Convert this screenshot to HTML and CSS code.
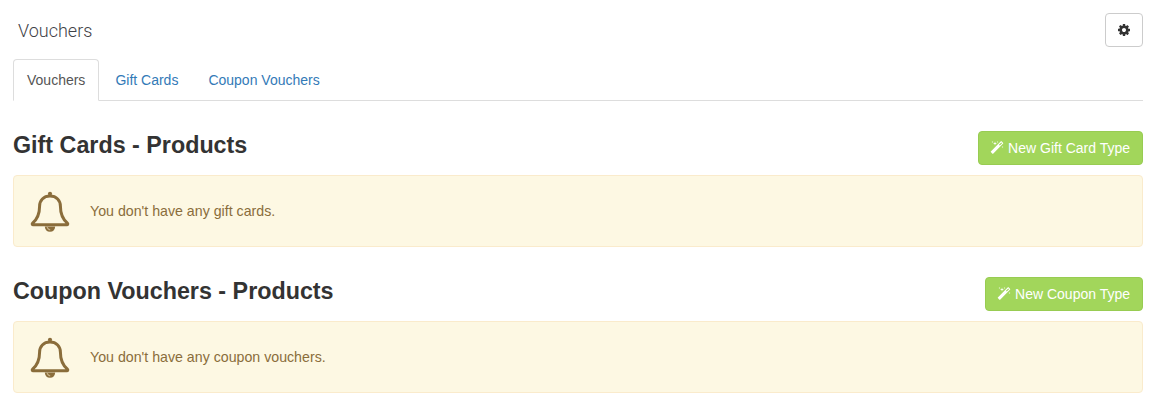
FILE: index.html
```html
<!DOCTYPE html>
<html lang="en">
<head>
<meta charset="utf-8">
<title>Vouchers</title>
<link rel="stylesheet" href="styles.css">
</head>
<body>
<div class="page">
  <header class="top">
    <h1 class="title">Vouchers</h1>
    <button class="btn-settings" type="button" aria-label="Settings">
      <svg class="icon-cog" viewBox="0 0 1792 1792"><path d="M1152 896q0-106-75-181t-181-75-181 75-75 181 75 181 181 75 181-75 75-181zm512-109v222q0 12-8 23t-20 13l-185 28q-19 54-39 91 35 50 107 138 10 12 10 25t-9 23q-27 37-99 108t-94 71q-12 0-26-9l-138-108q-44 23-91 38-16 136-29 186-7 28-36 28h-222q-14 0-24.5-8.5t-11.5-21.5l-28-184q-49-16-90-37l-141 107q-10 9-25 9-14 0-25-11-126-114-165-168-7-10-7-23 0-12 8-23 15-21 51-66.5t54-70.5q-27-50-41-99l-183-27q-13-2-21-12.5t-8-23.5v-222q0-12 8-23t19-13l186-28q14-46 39-92-40-57-107-138-10-12-10-24 0-10 9-23 26-36 98.5-107.5t94.5-71.5q13 0 26 10l138 107q44-23 91-38 16-136 29-186 7-28 36-28h222q14 0 24.5 8.5t11.5 21.5l28 184q49 16 90 37l142-107q9-9 24-9 13 0 25 10 129 119 165 170 7 8 7 22 0 12-8 23-15 21-51 66.5t-54 70.5q26 50 41 98l183 28q13 2 21 12.5t8 23.5z"/></svg>
    </button>
  </header>
  <nav class="tabs">
    <a class="tab tab-active" href="#">Vouchers</a>
    <a class="tab" href="#">Gift Cards</a>
    <a class="tab" href="#">Coupon Vouchers</a>
  </nav>
  <section class="block">
    <div class="block-head">
      <h2 class="block-title">Gift Cards - Products</h2>
      <a class="btn-new" href="#">
        <svg class="icon-wand" viewBox="0 0 1792 1792"><path d="M1254 581l293-293-107-107-293 293zm447-293q0 27-18 45l-1286 1286q-18 18-45 18t-45-18l-198-198q-18-18-18-45t18-45l1286-1286q18-18 45-18t45 18l198 198q18 18 18 45zm-1351-190l98 30-98 30-30 98-30-98-98-30 98-30 30-98zm350 162l196 60-196 60-60 196-60-196-196-60 196-60 60-196zm930 478l98 30-98 30-30 98-30-98-98-30 98-30 30-98zm-640-640l98 30-98 30-30 98-30-98-98-30 98-30 30-98z"/></svg>
        New Gift Card Type
      </a>
    </div>
    <div class="alert">
      <svg class="icon-bell" viewBox="0 0 40 43"><path class="bell-line" d="M20 6C13.5 6 9.6 10.5 9.6 16C9.6 25 7 29.5 2.6 33.2C1.9 33.8 2.2 34.8 3.2 34.8H36.8C37.8 34.8 38.1 33.8 37.4 33.2C33 29.5 30.4 25 30.4 16C30.4 10.5 26.5 6 20 6Z"/><circle class="bell-fill" cx="20" cy="3.8" r="2.1"/><path class="bell-fill" d="M14.8 36.5H25.2C25 39.8 23 41.8 20 41.8C17 41.8 15 39.8 14.8 36.5Z"/><path class="bell-inner" d="M17.2 37C17.5 38.6 18.5 39.6 20.2 39.8"/></svg>
      <p class="alert-text">You don't have any gift cards.</p>
    </div>
  </section>
  <section class="block">
    <div class="block-head">
      <h2 class="block-title">Coupon Vouchers - Products</h2>
      <a class="btn-new" href="#">
        <svg class="icon-wand" viewBox="0 0 1792 1792"><path d="M1254 581l293-293-107-107-293 293zm447-293q0 27-18 45l-1286 1286q-18 18-45 18t-45-18l-198-198q-18-18-18-45t18-45l1286-1286q18-18 45-18t45 18l198 198q18 18 18 45zm-1351-190l98 30-98 30-30 98-30-98-98-30 98-30 30-98zm350 162l196 60-196 60-60 196-60-196-196-60 196-60 60-196zm930 478l98 30-98 30-30 98-30-98-98-30 98-30 30-98zm-640-640l98 30-98 30-30 98-30-98-98-30 98-30 30-98z"/></svg>
        New Coupon Type
      </a>
    </div>
    <div class="alert">
      <svg class="icon-bell" viewBox="0 0 40 43"><path class="bell-line" d="M20 6C13.5 6 9.6 10.5 9.6 16C9.6 25 7 29.5 2.6 33.2C1.9 33.8 2.2 34.8 3.2 34.8H36.8C37.8 34.8 38.1 33.8 37.4 33.2C33 29.5 30.4 25 30.4 16C30.4 10.5 26.5 6 20 6Z"/><circle class="bell-fill" cx="20" cy="3.8" r="2.1"/><path class="bell-fill" d="M14.8 36.5H25.2C25 39.8 23 41.8 20 41.8C17 41.8 15 39.8 14.8 36.5Z"/><path class="bell-inner" d="M17.2 37C17.5 38.6 18.5 39.6 20.2 39.8"/></svg>
      <p class="alert-text">You don't have any coupon vouchers.</p>
    </div>
  </section>
</div>
</body>
</html>
```
FILE: styles.css
```css
* { box-sizing: border-box; }
html, body { margin: 0; padding: 0; background: #fff; }
body {
  font-family: "Liberation Sans", Arial, sans-serif;
  font-size: 14px;
  color: #333;
  height: 420px;
  overflow: hidden;
}
.page { padding: 13px 10px 0 13px; }
.top {
  display: flex;
  justify-content: space-between;
  align-items: center;
  height: 34px;
  margin-bottom: 12px;
}
.title {
  margin: 0 0 0 5px;
  font-family: Roboto, "Liberation Sans", sans-serif;
  font-size: 18px;
  font-weight: 300;
  color: #3f4248;
}
.btn-settings {
  display: flex;
  align-items: center;
  justify-content: center;
  width: 38px;
  height: 34px;
  padding: 0;
  background: #fff;
  border: 1px solid #ccc;
  border-radius: 4px;
}
.icon-cog { width: 14px; height: 14px; fill: #333; }
.tabs {
  display: flex;
  gap: 2px;
  height: 42px;
  border-bottom: 1px solid #ddd;
  margin-bottom: 30px;
}
.tab {
  display: block;
  height: 42px;
  padding: 11px 13px 0;
  line-height: 18px;
  color: #337ab7;
  text-decoration: none;
  border: 1px solid transparent;
  border-radius: 4px 4px 0 0;
}
.tab-active {
  color: #555;
  background: #fff;
  border-color: #ddd #ddd #fff;
}
.block { margin-bottom: 30px; }
.block-head {
  display: flex;
  justify-content: space-between;
  align-items: center;
  height: 34px;
  margin-bottom: 10px;
}
.block-title {
  margin: 0;
  font-size: 23.3px;
  font-weight: 700;
  color: #333;
  position: relative;
  top: -3px;
}
.btn-new {
  display: flex;
  align-items: center;
  gap: 4px;
  height: 34px;
  padding: 0 12px 0 11.5px;
  color: #fff;
  text-decoration: none;
  background: #a2d65b;
  border: 1px solid #98cc52;
  border-radius: 4px;
}
.icon-wand { width: 14px; height: 14px; fill: #fff; }
.alert {
  display: flex;
  align-items: center;
  height: 72px;
  padding-left: 16px;
  background: #fdf8e3;
  border: 1px solid #faebcc;
  border-radius: 4px;
  color: #8a6d3b;
}
.icon-bell { width: 40px; height: 43px; flex: none; }
.bell-line { fill: none; stroke: #8a6d3b; stroke-width: 3; stroke-linejoin: round; }
.bell-fill { fill: #8a6d3b; }
.bell-inner { fill: none; stroke: #c9b48a; stroke-width: 1.2; }
.alert-text { margin: 0 0 0 20px; font-size: 14.2px; }
```
